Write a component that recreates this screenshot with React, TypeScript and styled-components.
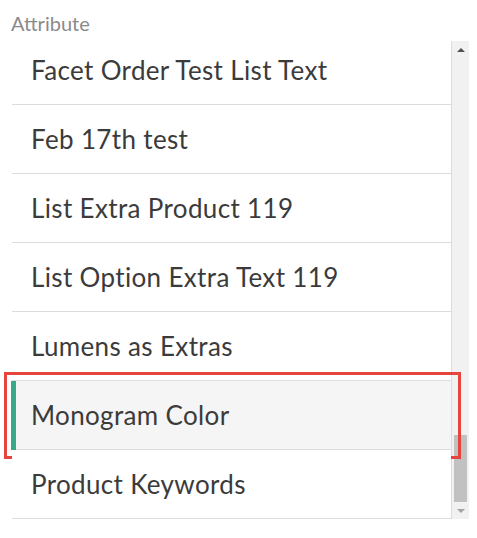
import React from "react";
import styled, { createGlobalStyle } from "styled-components";

const Global = createGlobalStyle`
  html, body { margin: 0; padding: 0; background: #ffffff; }
  body { font-family: Lato, "Liberation Sans", sans-serif; }
`;

const Page = styled.div`
  width: 477px;
  height: 538px;
  box-sizing: border-box;
  padding: 11px 8px 0 11px;
  display: flex;
  flex-direction: column;
`;

const Label = styled.div`
  font-size: 20px;
  line-height: 24px;
  color: #8a8a8a;
  margin-bottom: 6px;
`;

const Frame = styled.div`
  display: flex;
  height: 478px;
  margin-left: 1px;
`;

const List = styled.div`
  flex: 1;
  position: relative;
  z-index: 1;
  border-right: 1px solid #dcdcdc;
  clip-path: inset(0 -20px 0 -20px);
`;

const Rows = styled.div<{ $offset: number }>`
  display: flex;
  flex-direction: column;
  margin-top: ${(p) => -p.$offset}px;
`;

const Row = styled.div<{ $selected?: boolean }>`
  position: relative;
  height: 68px;
  display: flex;
  align-items: center;
  padding-left: 19px;
  border-bottom: 1px solid #dcdcdc;
  font-size: 26px;
  letter-spacing: 0.35px;
  color: #3b3b3b;
  background: ${(p) => (p.$selected ? "#f5f5f5" : "#ffffff")};
  white-space: nowrap;
`;

const Indicator = styled.span`
  position: absolute;
  left: -1px;
  top: 0;
  bottom: -1px;
  width: 5px;
  background: #38a98b;
`;

const Highlight = styled.span`
  position: absolute;
  left: -8px;
  top: -9px;
  right: -10px;
  bottom: -10px;
  border: 3px solid #e5453d;
  pointer-events: none;
`;

const ScrollBar = styled.div`
  width: 17px;
  background: #f1f1f1;
  display: flex;
  flex-direction: column;
`;

const ArrowButton = styled.div<{ $dir: "up" | "down"; $color: string }>`
  height: 17px;
  display: flex;
  align-items: center;
  justify-content: center;
  &::after {
    content: "";
    width: 0;
    height: 0;
    border-left: 4px solid transparent;
    border-right: 4px solid transparent;
    ${(p) =>
      p.$dir === "up"
        ? `border-bottom: 4px solid ${p.$color};`
        : `border-top: 4px solid ${p.$color};`}
  }
`;

const Track = styled.div`
  flex: 1;
  display: flex;
  flex-direction: column;
  justify-content: flex-end;
`;

const Thumb = styled.div`
  height: 67px;
  margin: 0 2px;
  background: #c1c1c1;
`;

const items = [
  "Facet Order Test List Text",
  "Feb 17th test",
  "List Extra Product 119",
  "List Option Extra Text 119",
  "Lumens as Extras",
  "Monogram Color",
  "Product Keywords",
];

const selected = "Monogram Color";

export default function App() {
  return (
    <>
      <Global />
      <Page>
        <Label>Attribute</Label>
        <Frame>
          <List>
            <Rows $offset={5}>
              {items.map((t) => (
                <Row key={t} $selected={t === selected}>
                  {t === selected && <Indicator />}
                  {t}
                  {t === selected && <Highlight />}
                </Row>
              ))}
            </Rows>
          </List>
          <ScrollBar>
            <ArrowButton $dir="up" $color="#505050" />
            <Track>
              <Thumb />
            </Track>
            <ArrowButton $dir="down" $color="#a3a3a3" />
          </ScrollBar>
        </Frame>
      </Page>
    </>
  );
}
